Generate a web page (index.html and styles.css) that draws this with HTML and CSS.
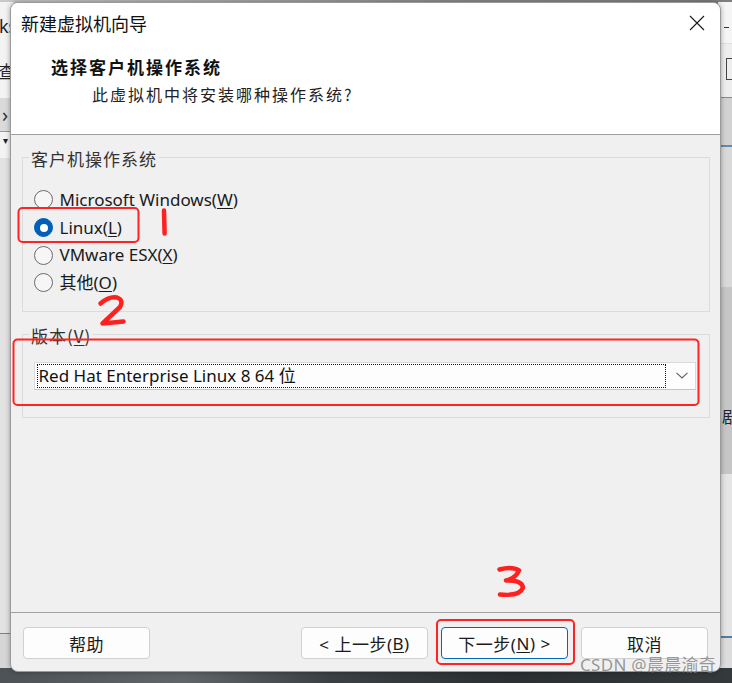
FILE: index.html
```html
<!DOCTYPE html>
<html lang="zh-CN">
<head>
<meta charset="utf-8">
<title>新建虚拟机向导</title>
<link rel="stylesheet" href="styles.css">
</head>
<body>
<div class="desktop">
  <div class="bg-top"></div>
  <div class="bg-left">
    <div class="bl-a"><span class="bl-k">ks</span><span class="bl-cha">查</span></div>
    <div class="bl-b"><span class="bl-gt">›</span></div>
    <div class="bl-c"><span class="bl-tri">▾</span></div>
    <div class="bl-d"></div>
    <div class="bl-e"></div>
  </div>
  <div class="bg-right">
    <div class="br-a"><span class="br-min"></span></div>
    <div class="br-b"><span class="br-max"></span></div>
    <div class="br-c"></div>
    <div class="br-d"></div>
    <div class="br-e"><span class="br-ch">剧</span></div>
    <div class="br-f"></div>
    <div class="br-g"></div>
  </div>
  <div class="bg-bottom"></div>

  <div class="dialog">
    <div class="head">
      <div class="titlebar">
        <span class="title">新建虚拟机向导</span>
        <svg class="close" width="16" height="16" viewBox="0 0 16 16"><path d="M1 1 L15 15 M15 1 L1 15" stroke="#1a1a1a" stroke-width="1.1" fill="none"/></svg>
      </div>
      <div class="intro">
        <div class="h1">选择客户机操作系统</div>
        <div class="sub">此虚拟机中将安装哪种操作系统?</div>
      </div>
    </div>

    <div class="body">
      <fieldset class="group os">
        <legend>客户机操作系统</legend>
        <div class="radio"><span class="dot"></span><span class="lbl">Microsoft Windows(<u>W</u>)</span></div>
        <div class="radio on"><span class="dot"></span><span class="lbl">Linux(<u>L</u>)</span></div>
        <div class="radio"><span class="dot"></span><span class="lbl">VMware ESX(<u>X</u>)</span></div>
        <div class="radio"><span class="dot"></span><span class="lbl">其他(<u>O</u>)</span></div>
      </fieldset>

      <fieldset class="group ver">
        <legend>版本(<u>V</u>)</legend>
        <div class="select">
          <div class="focus">Red Hat Enterprise Linux 8 64 位</div>
          <svg class="chev" width="12" height="7" viewBox="0 0 12 7"><path d="M0.5 0.8 L6 6 L11.5 0.8" stroke="#606060" stroke-width="1.1" fill="none"/></svg>
        </div>
      </fieldset>
    </div>

    <div class="footer">
      <div class="btn">帮助</div>
      <div class="right">
        <div class="btn">&lt; 上一步(<u>B</u>)</div>
        <div class="btn default">下一步(<u>N</u>) &gt;</div>
        <div class="btn">取消</div>
      </div>
    </div>
  </div>

  <div class="marks">
    <svg width="732" height="683" viewBox="0 0 732 683">
      <g fill="none" stroke="#ff2323" stroke-width="2">
        <rect x="18.5" y="208" width="120" height="34" rx="4"/>
        <rect x="13.5" y="339.5" width="685" height="65.5" rx="4"/>
        <rect x="437" y="620" width="137" height="44" rx="4"/>
      </g>
      <g fill="none" stroke="#ff2020" stroke-width="4.5" stroke-linecap="round" stroke-linejoin="round">
        <path d="M164 210.5 L164.6 233.5"/>
        <path d="M100.5 303.5 Q109 296 117 297.5 Q124 300 120 307 L102.5 323.5 L123.5 321.5"/>
        <path d="M499.5 569.5 Q512 566 519 570.5 Q516 578 506 580.5 Q522 580 523 587.5 Q520 596.5 500 594.5"/>
      </g>
    </svg>
    <div class="watermark">CSDN @晨晨渝奇</div>
  </div>
</div>
</body>
</html>
```

FILE: styles.css
```css
* { box-sizing: border-box; }
html, body { margin: 0; padding: 0; }
body {
  width: 732px;
  height: 683px;
  overflow: hidden;
  background: #3f4548;
  font-family: "Noto Sans", "Noto Sans CJK SC", sans-serif;
  color: #1b1b1b;
}
.desktop { position: relative; width: 732px; height: 683px; overflow: hidden; }

/* background windows */
.bg-top { position: absolute; left: 0; top: 0; width: 732px; height: 4px; background: linear-gradient(90deg, #c9c9c9, #8c8c8c 60%, #7d7d7d); }
.bg-left { position: absolute; left: 0; top: 2px; width: 14px; height: 670px; display: flex; flex-direction: column; background: #e4e4e4; }
.bl-a { height: 96px; background: #f3f3f3; position: relative; }
.bl-k { position: absolute; left: -1px; top: 12px; font-size: 18px; color: #222; }
.bl-cha { position: absolute; left: -2px; top: 56px; font-size: 17px; color: #222; }
.bl-b { height: 34px; background: #dadada; border-bottom: 1px solid #9a9a9a; position: relative; }
.bl-gt { position: absolute; left: 2px; top: 3px; font-size: 20px; color: #333; }
.bl-c { height: 26px; background: #f3f3f3; position: relative; }
.bl-tri { position: absolute; left: 3px; top: 1px; font-size: 10px; color: #222; }
.bl-d { height: 476px; background: #e2e2e2; border-bottom: 1px solid #808080; }
.bl-e { flex: 1; background: #d6d6d6; }

.bg-right { position: absolute; left: 718px; top: 2px; width: 14px; height: 670px; display: flex; flex-direction: column; background: #dadada; }
.br-a { height: 42px; background: #f5f5f5; border-bottom: 1px solid #e0e0e0; position: relative; }
.br-min { position: absolute; left: 6px; top: 25px; width: 5px; height: 1px; background: #333; }
.br-b { height: 54px; background: #eeeeee; border-bottom: 1px solid #8a8a8a; position: relative; }
.br-max { position: absolute; left: 8px; top: 14px; width: 8px; height: 22px; border: 1.5px solid #444; border-right: none; }
.br-c { height: 49px; background: #d2d2d2; border-bottom: 2px solid #5f8cae; }
.br-d { height: 140px; background: #d9d9d9; }
.br-e { height: 187px; background: #c6c6c6; position: relative; }
.br-ch { position: absolute; left: 4px; top: 117px; font-size: 16px; color: #222; }
.br-f { height: 164px; background: #e5e5e5; border-bottom: 2px solid #4f80a4; }
.br-g { flex: 1; background: #dcdcdc; }

.bg-bottom { position: absolute; left: 0; top: 668px; width: 732px; height: 15px; background: linear-gradient(90deg, #4c5255, #5f6669 25%, #3a4043 45%, #2b2f31 70%, #34393b); }

/* dialog */
.dialog {
  position: absolute;
  left: 10px;
  top: 2px;
  width: 711px;
  height: 670px;
  border: 1px solid #9a9a9a;
  border-radius: 8px;
  background: #f0f0f0;
  overflow: hidden;
  display: flex;
  flex-direction: column;
  box-shadow: 0 0 5px rgba(0, 0, 0, 0.35);
}
.head {
  height: 132px;
  flex: none;
  background: #fff;
  border-bottom: 1px solid #a0a0a0;
  padding-top: 8px;
}
.titlebar {
  height: 24px;
  display: flex;
  align-items: center;
  justify-content: space-between;
  padding: 0 15px 0 10px;
}
.title { font-size: 18px; line-height: 24px; font-family: "Noto Sans CJK SC", sans-serif; color: #111; }
.close { display: block; }
.intro { margin-top: 21px; }
.h1 {
  padding-left: 40px;
  font-family: "Noto Sans CJK SC", sans-serif;
  font-weight: 700;
  font-size: 17px;
  line-height: 22px;
  letter-spacing: 2px;
  color: #111;
}
.sub {
  margin-top: 5px;
  padding-left: 81px;
  font-family: "Noto Sans CJK SC", sans-serif;
  font-size: 16px;
  line-height: 22px;
  letter-spacing: 2px;
  color: #222;
}

.body { flex: 1; padding: 10px 10px 0 11px; }
.group {
  margin: 0;
  border: 1px solid #dcdcdc;
  min-width: 0;
}
.group legend {
  margin-left: -5px;
  padding: 3px 2px 0 2px;
  font-family: "Noto Sans CJK SC", sans-serif;
  font-size: 17px;
  line-height: 22px;
  letter-spacing: 1px;
  color: #333;
}
.group legend u { text-decoration-thickness: 1px; text-underline-offset: 2px; }
.os { padding: 16px 11px 14px 11px; }
.ver { margin-top: 10px; padding: 15px 13px 27px 11px; }

.radio { height: 27.7px; display: flex; align-items: center; }
.dot {
  width: 19px;
  height: 19px;
  border-radius: 50%;
  border: 1px solid #6b6b6b;
  background: #f6f6f6;
  margin-right: 6.5px;
  flex: none;
  position: relative;
}
.radio.on .dot { background: #005fb8; border-color: #005fb8; }
.radio.on .dot::after {
  content: "";
  position: absolute;
  left: 4.5px;
  top: 4.5px;
  width: 8px;
  height: 8px;
  border-radius: 50%;
  background: #fff;
}
.lbl { font-size: 17px; line-height: 22px; color: #1a1a1a; }
.lbl u { text-decoration-thickness: 1px; text-underline-offset: 2px; }

.select {
  height: 28px;
  background: #fdfdfd;
  border: 1px solid #dadada;
  border-bottom-color: #c4c4c4;
  display: flex;
  align-items: center;
  padding: 2px 7px 2px 1.5px;
}
.focus {
  flex: 1;
  height: 24px;
  border: 1px dotted #111;
  padding-left: 1px;
  font-size: 17px;
  line-height: 21px;
  color: #111;
  margin-right: 10px;
}
.chev { display: block; }

.footer {
  height: 59px;
  flex: none;
  border-top: 1px solid #a0a0a0;
  padding: 14px 12px 0 12px;
  display: flex;
  justify-content: space-between;
  align-items: flex-start;
}
.right { display: flex; gap: 13px; }
.btn {
  width: 127px;
  height: 32px;
  background: #fdfdfd;
  border: 1px solid #d0d0d0;
  border-radius: 4px;
  display: flex;
  align-items: center;
  justify-content: center;
  font-family: "Noto Sans", "Noto Sans CJK SC", sans-serif;
  font-size: 17px;
  letter-spacing: 0.5px;
  color: #1b1b1b;
}
.btn u { text-decoration-thickness: 1px; text-underline-offset: 2px; }
.btn.default { border-color: #0067c0; }

.marks { position: absolute; left: 0; top: 0; width: 732px; height: 683px; pointer-events: none; }
.marks svg { position: absolute; left: 0; top: 0; }
.watermark {
  position: absolute;
  left: 580px;
  top: 655px;
  font-size: 17px;
  line-height: 20px;
  letter-spacing: 0.3px;
  color: rgba(120, 120, 120, 0.75);
  font-family: "Noto Sans", "Noto Sans CJK SC", sans-serif;
  white-space: nowrap;
}
```
